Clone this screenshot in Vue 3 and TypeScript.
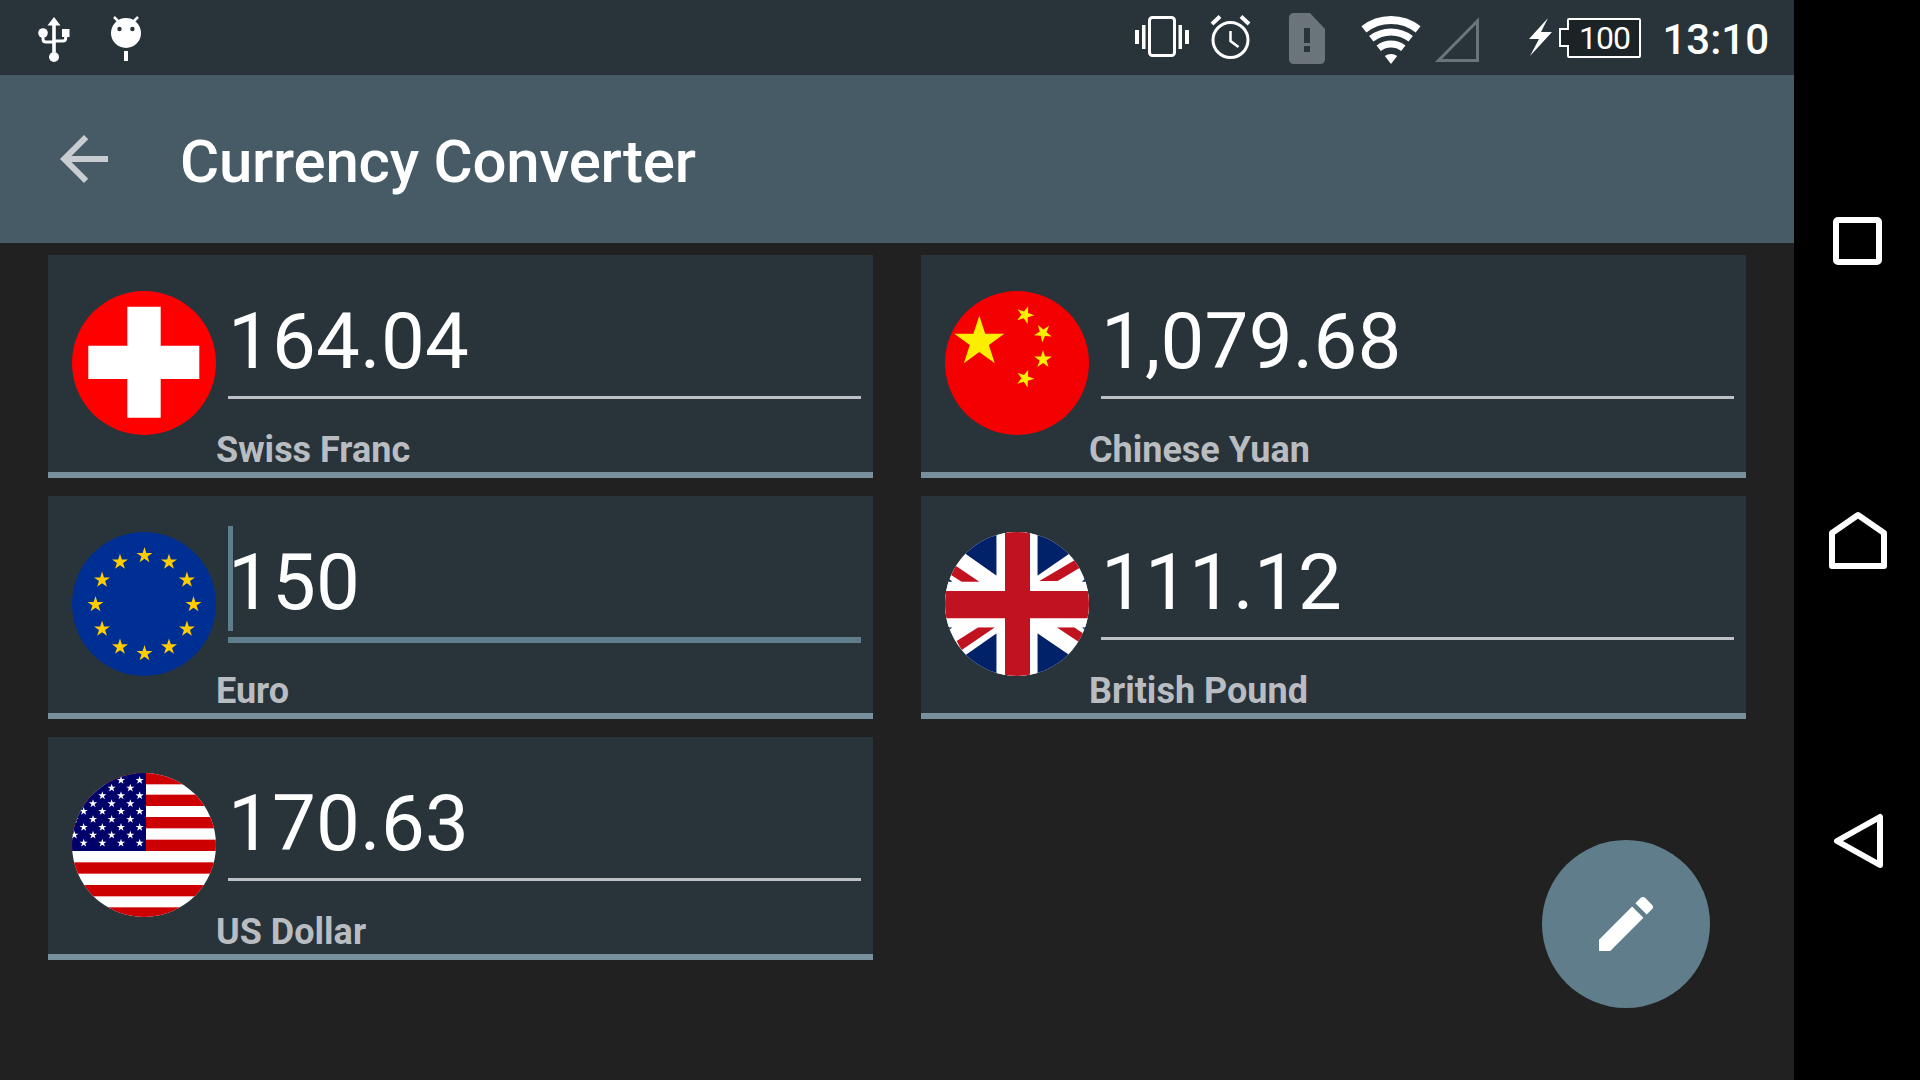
<script setup lang="ts">
function star(cx: number, cy: number, r: number, rot = 0): string {
  const pts: string[] = []
  for (let i = 0; i < 10; i++) {
    const rad = i % 2 === 0 ? r : r * 0.382
    const a = ((-90 + rot + i * 36) * Math.PI) / 180
    pts.push(`${(cx + rad * Math.cos(a)).toFixed(2)},${(cy + rad * Math.sin(a)).toFixed(2)}`)
  }
  return pts.join(' ')
}

const cnSmall = [
  star(80, 24, 9.4, 20),
  star(98, 42, 9.4, 40),
  star(98, 68.5, 9.4, 0),
  star(80, 87.5, 9.4, 20),
]
const euStars = Array.from({ length: 12 }, (_, i) => {
  const a = (i * 30 * Math.PI) / 180
  return star(72.5 + 49 * Math.sin(a), 72.5 - 49 * Math.cos(a), 8.4)
})
const usStripes = [68, 133, 200, 268, 336, 404, 471]
const usRows = [90, 113, 136, 160, 183, 207, 231, 254, 278]
const usStars: string[] = []
usRows.forEach((y, row) => {
  const xs = row % 2 === 0 ? [45, 101, 157, 213, 269] : [73, 129, 185, 241]
  xs.forEach((x) => usStars.push(star(x, y, 13)))
})

interface Currency {
  flag: string
  value: string
  name: string
  focused?: boolean
}
const currencies: Currency[] = [
  { flag: 'ch', value: '164.04', name: 'Swiss Franc' },
  { flag: 'cn', value: '1,079.68', name: 'Chinese Yuan' },
  { flag: 'eu', value: '150', name: 'Euro', focused: true },
  { flag: 'gb', value: '111.12', name: 'British Pound' },
  { flag: 'us', value: '170.63', name: 'US Dollar' },
]
</script>

<template>
  <div class="device">
    <main class="screen">
      <header class="status">
        <svg class="si usb" viewBox="36 0 36 75" width="36" height="75">
          <path d="M54 17l6.5 8.5h-4.7V52h-3.6V25.500h-4.700z" fill="#fff" />
          <circle cx="54" cy="57" r="5" fill="#fff" />
          <circle cx="43" cy="33" r="4.800" fill="#fff" />
          <rect x="62" y="29" width="7.500" height="8" fill="#fff" />
          <path d="M43 34v5q0 3 3 3h8M65.700 36v2q0 3-3 3H54" fill="none" stroke="#fff" stroke-width="3" />
        </svg>
        <svg class="si droid" viewBox="108 0 36 75" width="36" height="75">
          <circle cx="126" cy="33" r="15" fill="#fff" />
          <path d="M114 17l6 6M138 17l-6 6" stroke="#fff" stroke-width="2.500" />
          <circle cx="119.500" cy="29" r="2.200" fill="#29333a" />
          <circle cx="132.400" cy="29" r="2.200" fill="#29333a" />
          <rect x="124" y="51" width="4" height="10" fill="#fff" />
        </svg>

        <svg class="si vib" viewBox="1132 0 58 75" width="58" height="75">
          <rect x="1148.500" y="17.500" width="25" height="38" rx="3" fill="none" stroke="#fff" stroke-width="3" />
          <path d="M1134 30h4v14h-4zM1141 25h3.500v24H1141zM1177.500 25h3.500v24h-3.500zM1184 30h4v14h-4z" fill="#fff" />
        </svg>
        <svg class="si alarm" viewBox="1207 0 45 75" width="45" height="75">
          <circle cx="1229.500" cy="40" r="17.500" fill="none" stroke="#fff" stroke-width="3" />
          <path d="M1229.500 31v10l8 6" fill="none" stroke="#fff" stroke-width="2.500" />
          <path d="M1211 24l8-7.500M1240 16.500l8 7.500" stroke="#fff" stroke-width="4" />
        </svg>
        <svg class="si sim" viewBox="1286 0 40 75" width="40" height="75">
          <path d="M1293 13h16l15 16v30q0 5-5 5h-26q-5 0-5-5V18q0-5 5-5z" fill="#6b7478" />
          <path d="M1303 28h6v15h-6zM1303 46h6v6h-6z" fill="#29333a" />
        </svg>
        <svg class="si wifi" viewBox="1358 0 63 75" width="63" height="75">
          <g fill="none" stroke="#fff">
            <path d="M1362.900 29.300A44 44 0 0 1 1417.100 29.300" stroke-width="8" />
            <path d="M1370.300 38.800A32 32 0 0 1 1409.700 38.800" stroke-width="7" />
            <path d="M1377.700 48.200A20 20 0 0 1 1402.300 48.200" stroke-width="7" />
          </g>
          <path d="M1390 64l-6.200-7.900a10 10 0 0 1 12.400 0z" fill="#fff" />
        </svg>
        <svg class="si sig" viewBox="1432 0 48 75" width="48" height="75">
          <path d="M1437.500 60.500h39V21z" fill="none" stroke="#6b7478" stroke-width="3" />
        </svg>
        <svg class="si bolt" viewBox="1526 0 27 75" width="27" height="75">
          <path d="M1547 18l-19 21h10l-9 17 22-24h-11z" fill="#fff" />
        </svg>
        <div class="battery"><span>100</span></div>
        <div class="time">13:10</div>
      </header>

      <div class="toolbar">
        <svg class="back" viewBox="0 0 24 24" width="72" height="72">
          <path d="M20 11H7.830l5.590-5.590L12 4l-8 8 8 8 1.410-1.410L7.830 13H20v-2z" />
        </svg>
        <h1 class="title">Currency Converter</h1>
      </div>

      <div class="grid">
        <section v-for="c in currencies" :key="c.flag" class="card" :class="{ focused: c.focused }">
          <svg v-if="c.flag === 'ch'" class="flag" viewBox="0 0 144 144">
            <rect width="144" height="144" fill="#ff0000" />
            <path d="M55.300 15.700h33.400v39h38.600V88H88.700v38.700H55.300V88H16.300V54.700h39z" fill="#fff" />
          </svg>
          <svg v-else-if="c.flag === 'cn'" class="flag" viewBox="0 0 144 144">
            <rect width="144" height="144" fill="#f40000" />
            <polygon :points="star(34.300, 51, 26.300)" fill="#fbee00" />
            <polygon v-for="(p, i) in cnSmall" :key="i" :points="p" fill="#fbee00" />
          </svg>
          <svg v-else-if="c.flag === 'eu'" class="flag" viewBox="0 0 144 144">
            <rect width="144" height="144" fill="#002f94" />
            <polygon v-for="(p, i) in euStars" :key="i" :points="p" fill="#ffcc00" />
          </svg>
          <svg v-else-if="c.flag === 'gb'" class="flag" viewBox="75 66 432 432">
            <rect x="75" y="66" width="432" height="432" fill="#fff" />
            <g fill="#012169">
              <polygon points="230,60 230,197 100,106 100,60" />
              <polygon points="352,60 352,197 500,95 500,60" />
              <polygon points="230,505 230,370 90,468 90,505" />
              <polygon points="352,505 352,370 500,470 500,505" />
              <polygon points="70,190 97,215 70,215" />
              <polygon points="510,190 486,215 510,215" />
              <polygon points="70,375 97,352 70,352" />
              <polygon points="510,375 486,352 510,352" />
            </g>
            <g fill="#c1121f">
              <polygon points="107,167 178,215 125,215 93,195" />
              <polygon points="358,213 470,147 482,172 413,213" />
              <polygon points="175,352 225,352 125,420 110,393" />
              <polygon points="410,352 462,352 492,372 480,398" />
            </g>
            <path d="M230 60h122v156h160v136H352v150H230V352H70V216h160z" fill="#fff" />
            <path d="M255 60h75v183h180v82H330v180h-75V325H70v-82h185z" fill="#c1121f" />
          </svg>
          <svg v-else class="flag" viewBox="66 68 432 432">
            <rect x="66" y="68" width="432" height="432" fill="#fff" />
            <rect v-for="y in usStripes" :key="y" x="66" :y="y" width="432" height="34" fill="#cc0000" />
            <rect x="66" y="68" width="222" height="234" fill="#00006a" />
            <polygon v-for="(p, i) in usStars" :key="i" :points="p" fill="#fff" />
          </svg>

          <div class="field">
            <span v-if="c.focused" class="caret"></span>
            <span class="value">{{ c.value }}</span>
          </div>
          <div class="name">{{ c.name }}</div>
        </section>
      </div>

      <button class="fab" type="button" aria-label="Edit">
        <svg viewBox="0 0 24 24" width="72" height="72">
          <path d="M3 17.250V21h3.750L17.810 9.940l-3.750-3.750L3 17.250zM20.710 7.040c.39-.39.39-1.020 0-1.410l-2.340-2.340c-.39-.39-1.020-.39-1.410 0l-1.830 1.830 3.750 3.750 1.830-1.830z" fill="#fff" />
        </svg>
      </button>
    </main>

    <nav class="nav">
      <svg viewBox="0 0 72 72" width="72" height="72">
        <rect x="15" y="16" width="43" height="42" rx="2" />
      </svg>
      <svg viewBox="0 0 72 72" width="72" height="72">
        <path d="M11 62V29l26-18 26 18v33z" />
      </svg>
      <svg viewBox="0 0 72 72" width="72" height="72">
        <path d="M59 13v48L16 37z" />
      </svg>
    </nav>
  </div>
</template>

<style>
html,
body {
  margin: 0;
  background: #000;
}
</style>

<style scoped>
.device {
  display: flex;
  width: 1920px;
  height: 1080px;
  overflow: hidden;
  font-family: Roboto, "Liberation Sans", sans-serif;
  color: #fff;
}
.screen {
  position: relative;
  width: 1794px;
  height: 1080px;
  background: #212121;
}
.status {
  display: flex;
  align-items: center;
  height: 75px;
  padding: 0 25px 0 36px;
  box-sizing: border-box;
  background: #29333a;
}
.si {
  flex: none;
  display: block;
}
.droid {
  margin-left: 36px;
}
.vib {
  margin-left: auto;
}
.alarm {
  margin-left: 17px;
}
.sim {
  margin-left: 34px;
}
.wifi {
  margin-left: 32px;
}
.sig {
  margin-left: 11px;
}
.bolt {
  margin-left: 46px;
}
.battery {
  position: relative;
  flex: none;
  display: flex;
  align-items: center;
  justify-content: center;
  box-sizing: border-box;
  width: 74px;
  height: 40px;
  margin-left: 13px;
  border: 2.5px solid #fff;
  border-radius: 2px;
  background: #1c2327;
  font-size: 32px;
  letter-spacing: -1px;
  line-height: 1;
}
.battery::before {
  content: "";
  position: absolute;
  left: -10px;
  top: 8px;
  width: 10px;
  height: 19px;
  box-sizing: border-box;
  border: 2.5px solid #fff;
  border-right: 0;
  background: #1c2327;
}
.time {
  flex: none;
  margin-left: 21px;
  padding-top: 4px;
  font-size: 42px;
  font-weight: 500;
}
.toolbar {
  display: flex;
  align-items: center;
  height: 168px;
  padding-left: 48px;
  background: #475b67;
}
.back {
  flex: none;
  fill: #c8cdd1;
}
.title {
  margin: 6px 0 0 60px;
  font-size: 60px;
  font-weight: 500;
  line-height: 70px;
  letter-spacing: -0.22px;
}
.grid {
  display: grid;
  grid-template-columns: 825px 825px;
  grid-auto-rows: 223px;
  column-gap: 48px;
  row-gap: 18px;
  padding: 12px 0 0 48px;
}
.card {
  display: grid;
  grid-template-columns: 168px 1fr;
  grid-template-rows: 147px 1fr;
  box-sizing: border-box;
  border-bottom: 6px solid #78909c;
  background: #29333a;
}
.flag {
  grid-row: 1 / 3;
  display: block;
  width: 144px;
  height: 144px;
  margin: 36px 0 0 24px;
  border-radius: 50%;
}
.field {
  position: relative;
  box-sizing: border-box;
  height: 144px;
  margin: 0 12px;
  padding-top: 42px;
  border-bottom: 3px solid #bdc1c5;
}
.focused .field {
  height: 147px;
  border-bottom: 6px solid #607d8b;
}
.value {
  display: block;
  font-size: 78px;
  line-height: 90px;
  letter-spacing: 0.2px;
}
.caret {
  position: absolute;
  left: 0;
  top: 30px;
  width: 5px;
  height: 105px;
  background: #607d8b;
}
.name {
  margin-top: 30px;
  font-size: 36px;
  font-weight: 700;
  line-height: 37px;
  color: #b9bdc1;
}
.fab {
  position: absolute;
  right: 84px;
  bottom: 72px;
  display: flex;
  align-items: center;
  justify-content: center;
  width: 168px;
  height: 168px;
  padding: 0;
  border: 0;
  border-radius: 50%;
  background: #607d8b;
}
.nav {
  flex: none;
  display: flex;
  flex-direction: column;
  align-items: center;
  justify-content: center;
  gap: 228px;
  width: 126px;
  background: #000;
}
.nav svg {
  fill: none;
  stroke: #fff;
  stroke-width: 6;
  stroke-linejoin: round;
}
</style>
